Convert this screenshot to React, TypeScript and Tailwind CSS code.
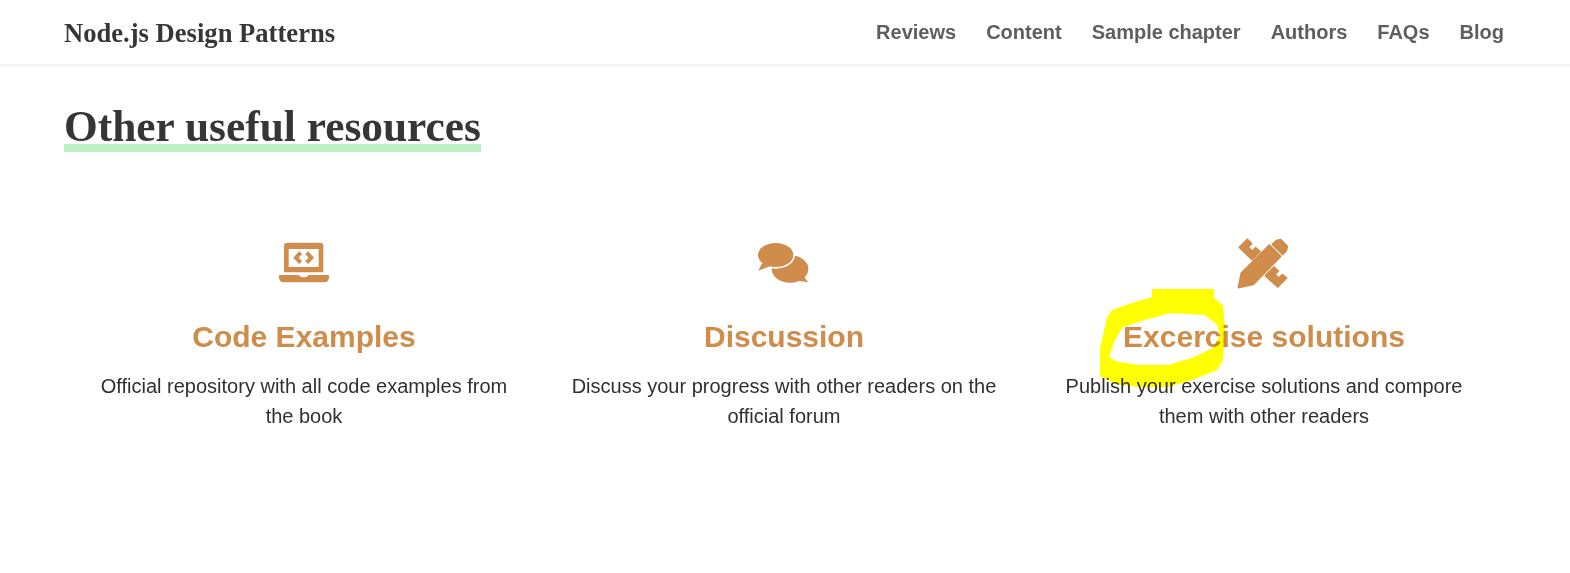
const links = ["Reviews", "Content", "Sample chapter", "Authors", "FAQs", "Blog"];

function LaptopIcon() {
  return (
    <svg width="90" height="54" viewBox="-5 33 270 162" fill="#cf8c4a">
      <path
        fillRule="evenodd"
        d="M80 53 H178 Q188 53 188 63 V142 H70 V63 Q70 53 80 53 Z M84 72 V126 H174 V72 Z"
      />
      <path d="M55 150 H115 Q118 157 125 157 H133 Q140 157 143 150 H205 V156 Q205 172 190 172 H70 Q55 172 55 156 Z" />
      <path d="M120 83 L106 98 L120 113 M138 83 L152 98 L138 113" fill="none" stroke="#cf8c4a" strokeWidth="12" />
    </svg>
  );
}

function CommentsIcon() {
  return (
    <svg width="90" height="54" viewBox="-3 33 270 162" fill="#cf8c4a">
      <ellipse cx="150" cy="132" rx="55" ry="41" />
      <polygon points="185,148 205,172 172,167" />
      <ellipse cx="107" cy="90" rx="53" ry="36" stroke="#ffffff" strokeWidth="10" paintOrder="stroke" />
      <polygon points="66,115 55,137 90,124" />
    </svg>
  );
}

function PencilRulerIcon() {
  return (
    <svg width="90" height="54" viewBox="-35 11 270 162" fill="#cf8c4a" stroke="#cf8c4a" strokeWidth="5" strokeLinejoin="round">
      <polygon points="26,45 50,21 63,34 53,44 65,56 75,46 88,58 64,82" />
      <polygon points="130,104 104,130 141,164 168,137 155,127 144,137 133,126 143,116" />
      <polygon points="116,38 150,72 68,156 23,166 32,122" />
      <polygon points="125,36 137,25 150,22 170,42 167,55 156,67" />
    </svg>
  );
}

const resources = [
  {
    icon: <LaptopIcon />,
    title: "Code Examples",
    text: "Official repository with all code examples from the book",
  },
  {
    icon: <CommentsIcon />,
    title: "Discussion",
    text: "Discuss your progress with other readers on the official forum",
  },
  {
    icon: <PencilRulerIcon />,
    title: "Excercise solutions",
    text: "Publish your exercise solutions and compore them with other readers",
  },
];

export default function App() {
  return (
    <div className="relative h-[573px] overflow-hidden bg-white font-['Liberation_Sans',Arial,sans-serif] text-[#363636]">
      {/* Navbar */}
      <nav className="flex h-[67px] items-center justify-between border-b-[3px] border-[#f5f5f5] pl-16 pr-[66px]">
        <a className="mt-[3px] font-['Liberation_Serif',serif] text-[26.6px] font-bold">Node.js Design Patterns</a>
        <ul className="flex gap-[30px] text-[20px] font-bold text-[#5e5e5e]">
          {links.map((link) => (
            <li key={link}>{link}</li>
          ))}
        </ul>
      </nav>

      <section className="px-16">
        <h2 className="mt-[31px] inline-block h-[54px] bg-[linear-gradient(#bdefc4,#bdefc4)] bg-[length:100%_8px] bg-bottom bg-no-repeat font-['Liberation_Serif',serif] text-[43.4px] leading-[56px] font-bold">
          Other useful resources
        </h2>

        {/* Resources */}
        <div className="mt-[84px] grid w-[1440px] grid-cols-3">
          {resources.map((item) => (
            <div key={item.title} className="flex flex-col items-center px-[30px] text-center">
              <div className="flex h-[54px] items-center">{item.icon}</div>
              <h3 className="mt-[28px] text-[30px] leading-[38px] font-bold text-[#cf8c4a]">{item.title}</h3>
              <p className="mt-[15px] w-[430px] text-[20px] leading-[30px] text-[#303030]">{item.text}</p>
            </div>
          ))}
        </div>
      </section>

      {/* Hand-drawn highlight over the screenshot */}
      <svg className="pointer-events-none absolute top-0 left-0 mix-blend-multiply" width="1570" height="573">
        <path
          fillRule="evenodd"
          fill="#ffff00"
          d="M1152 297 L1152 289 L1214 289 L1214 298 L1223 305 L1225 328 L1223 360 L1217 370 L1192 380 L1168 387 L1138 387 L1116 384 L1100 376 L1100 348 L1107 318 L1112 310 L1132 303 Z M1170 313 L1205 315 L1217 325 L1220 335 L1213 348 L1192 358 L1168 365 L1138 365 L1115 361 L1109 357 L1115 340 L1123 327 L1145 320 Z"
        />
      </svg>
    </div>
  );
}
